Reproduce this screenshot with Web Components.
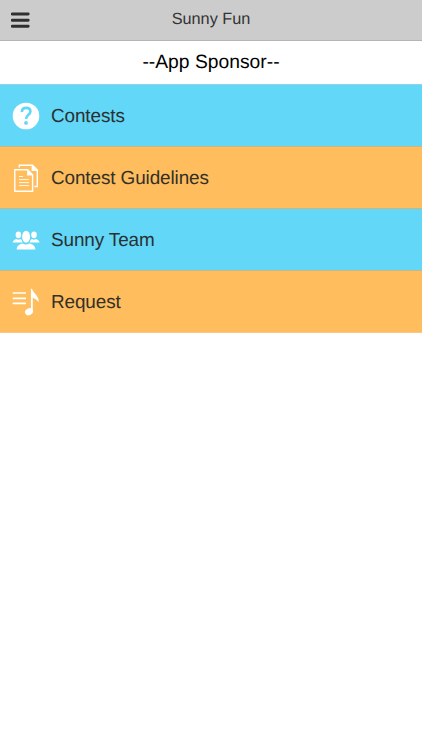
<!DOCTYPE html>
<html lang="en">
<head>
<meta charset="utf-8">
<meta name="viewport" content="width=device-width, initial-scale=1">
<title>Sunny Fun</title>
<style>
  body {
    margin: 0;
    background: #fff;
    font-family: "Liberation Sans", Arial, sans-serif;
    text-rendering: geometricPrecision;
  }
</style>
</head>
<body>
<app-screen>
  <app-header slot="header">Sunny Fun</app-header>
  <app-sponsor>--App Sponsor--</app-sponsor>
  <menu-list>
    <menu-row icon="help" tone="blue">Contests</menu-row>
    <menu-row icon="pages" tone="orange">Contest Guidelines</menu-row>
    <menu-row icon="team" tone="blue">Sunny Team</menu-row>
    <menu-row icon="music" tone="orange">Request</menu-row>
  </menu-list>
</app-screen>

<script>
  // 28x28 white glyphs, one per menu row
  const ICONS = {
    help: `
      <circle cx="14" cy="14" r="13.3" fill="#fff"/>
      <path d="M9.9 10C10 7.3 11.6 5.9 14.1 5.9C16.8 5.9 18.4 7.3 18.4 9.5C18.4 13 14.1 12.7 14.1 17" fill="none" stroke="#62d7f7" stroke-width="2.6"/>
      <circle cx="14" cy="20.9" r="1.9" fill="#62d7f7"/>`,
    pages: `
      <g fill="none" stroke="#fff" stroke-width="1.4">
        <path d="M7.3 3.6V1.3H20.5L25.3 6.1V22.5H22.4"/>
        <path d="M2.8 5.8H15.6L20.6 10.8V27.2H2.8Z"/>
      </g>
      <path d="M19.6 .8L25.8 7H19.6ZM15.1 5.4L21.2 11.5H15.1Z" fill="#fff"/>
      <path d="M7 12.5H11M7 15.6H17M7 18.6H17M7 21.6H17" fill="none" stroke="#fff" stroke-width=".9"/>`,
    team: `
      <g fill="#fff">
        <ellipse cx="6.4" cy="8.8" rx="2.8" ry="3.4"/>
        <ellipse cx="22" cy="8.8" rx="2.8" ry="3.4"/>
        <path d="M.7 16.6C.9 14.6 2.5 13.6 4.4 13.1C5.6 13.8 7 13.8 8.1 13.1C9 13.3 9.4 13.8 9.8 14.6L10.6 16.6ZM27.5 16.6C27.3 14.6 25.7 13.6 23.8 13.1C22.6 13.8 21.2 13.8 20.1 13.1C19.2 13.3 18.8 13.8 18.4 14.6L17.6 16.6Z"/>
        <ellipse cx="14.1" cy="10.8" rx="4" ry="6"/>
        <path d="M4.7 23.4C4.7 20.1 7.3 18.4 10.8 17.6C12.7 18.8 15.4 18.8 17.3 17.6C20.8 18.4 23.4 20.1 23.4 23.4Z"/>
      </g>`,
    music: `
      <path d="M.7 5H14M.7 10.3H14M.7 15.4H14" fill="none" stroke="#fff" stroke-width="1.7"/>
      <ellipse cx="17" cy="23.8" rx="4.1" ry="3.4" transform="rotate(-28 17 23.8)" fill="#fff"/>
      <path d="M18.9 .8H20.1C20.8 5.2 27.8 8.2 26.6 14.3C25.2 12.1 23 10.6 20.8 10.1V23.2H18.9Z" fill="#fff"/>`
  };

  class AppScreen extends HTMLElement {
    constructor() {
      super();
      this.attachShadow({ mode: 'open' });
    }

    connectedCallback() {
      this.shadowRoot.innerHTML = `
        <style>
          :host {
            display: flex;
            flex-direction: column;
            min-height: 100vh;
            background: #fff;
          }
          main {
            display: flex;
            flex-direction: column;
          }
        </style>
        <slot name="header"></slot>
        <main><slot></slot></main>
      `;
    }
  }

  class AppHeader extends HTMLElement {
    constructor() {
      super();
      this.attachShadow({ mode: 'open' });
    }

    connectedCallback() {
      this.shadowRoot.innerHTML = `
        <style>
          :host {
            display: grid;
            grid-template-columns: 40px 1fr 40px;
            align-items: center;
            box-sizing: border-box;
            height: 41px;
            background: #ccc;
            border-bottom: 1px solid #b5b5b5;
            color: #333;
          }
          button {
            display: block;
            padding: 0 0 0 11px;
            border: 0;
            background: none;
          }
          svg {
            display: block;
          }
          .title {
            text-align: center;
            font-size: 16.3px;
            line-height: 20px;
            padding-bottom: 2px;
          }
        </style>
        <button aria-label="Menu">
          <svg width="19" height="16" viewBox="0 0 19 16">
            <path d="M1.2 2H17.2M1.2 8.2H17.2M1.2 14.2H17.2" stroke="#2f2f2f" stroke-width="2.9" stroke-linecap="round"/>
          </svg>
        </button>
        <div class="title"><slot></slot></div>
      `;
    }
  }

  class AppSponsor extends HTMLElement {
    constructor() {
      super();
      this.attachShadow({ mode: 'open' });
    }

    connectedCallback() {
      this.shadowRoot.innerHTML = `
        <style>
          :host {
            display: flex;
            justify-content: center;
            height: 43px;
            line-height: 44px;
            font-size: 19.3px;
            color: #000;
          }
        </style>
        <slot></slot>
      `;
    }
  }

  class MenuList extends HTMLElement {
    constructor() {
      super();
      this.attachShadow({ mode: 'open' });
    }

    connectedCallback() {
      this.shadowRoot.innerHTML = `
        <style>
          :host {
            display: flex;
            flex-direction: column;
            border-bottom: 1px solid #f5c987;
          }
        </style>
        <slot></slot>
      `;
    }
  }

  class MenuRow extends HTMLElement {
    constructor() {
      super();
      this.attachShadow({ mode: 'open' });
    }

    connectedCallback() {
      const icon = ICONS[this.getAttribute('icon')] || '';
      this.shadowRoot.innerHTML = `
        <style>
          :host {
            display: flex;
            align-items: center;
            gap: 11px;
            box-sizing: border-box;
            height: 62px;
            padding-left: 12px;
            border-top: 1px solid #c4b884;
            background: #62d7f7;
            color: #2b3033;
            font-size: 18.9px;
            line-height: 22px;
            letter-spacing: -.1px;
          }
          :host([tone="orange"]) {
            background: #ffbd5d;
            color: #333029;
          }
          :host(:first-child) {
            border-top-color: #8fd5e8;
          }
          svg {
            display: block;
            flex: none;
            margin-top: 1px;
          }
          .label {
            padding-top: 3px;
          }
        </style>
        <svg width="28" height="28" viewBox="0 0 28 28">${icon}</svg>
        <div class="label"><slot></slot></div>
      `;
    }
  }

  customElements.define('app-screen', AppScreen);
  customElements.define('app-header', AppHeader);
  customElements.define('app-sponsor', AppSponsor);
  customElements.define('menu-list', MenuList);
  customElements.define('menu-row', MenuRow);
</script>
</body>
</html>
